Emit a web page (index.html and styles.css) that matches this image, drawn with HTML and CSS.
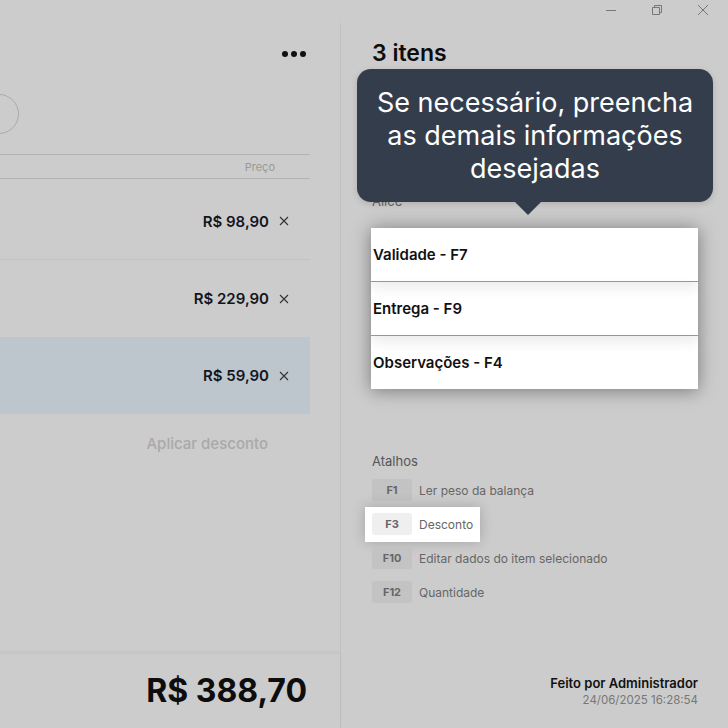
FILE: index.html
```html
<!DOCTYPE html>
<html lang="pt-BR">
<head>
  <meta charset="UTF-8">
  <title>PDV</title>
  <link rel="stylesheet" href="styles.css">
</head>
<body>

  <div class="window">
    <div class="titlebar">
      <span class="win-btn">
        <svg width="12" height="12" viewBox="0 0 12 12"><path d="M1 6.5h10" stroke="#777" stroke-width="1"/></svg>
      </span>
      <span class="win-btn">
        <svg width="12" height="12" viewBox="0 0 12 12"><path d="M1.5 3.5h7v7h-7z M3.5 3.5v-2h7v7h-2" fill="none" stroke="#777" stroke-width="1"/></svg>
      </span>
      <span class="win-btn">
        <svg width="12" height="12" viewBox="0 0 12 12"><path d="M1 1l10 10M11 1L1 11" stroke="#777" stroke-width="1"/></svg>
      </span>
    </div>

    <div class="main">
      <!-- CARRINHO -->
      <div class="cart">
        <div class="cart-top">
          <span class="more"><i></i><i></i><i></i></span>
        </div>
        <div class="client-row">
          <span class="avatar"></span>
        </div>
        <div class="table-head">Preço</div>
        <div class="rows">
          <div class="row sep">
            <span class="price">R$ 98,90</span>
            <svg class="remove" width="10" height="10" viewBox="0 0 10 10"><path d="M1 1l8 8M9 1L1 9" stroke="#333" stroke-width="1.1"/></svg>
          </div>
          <div class="row">
            <span class="price">R$ 229,90</span>
            <svg class="remove" width="10" height="10" viewBox="0 0 10 10"><path d="M1 1l8 8M9 1L1 9" stroke="#333" stroke-width="1.1"/></svg>
          </div>
          <div class="row selected">
            <span class="price">R$ 59,90</span>
            <svg class="remove" width="10" height="10" viewBox="0 0 10 10"><path d="M1 1l8 8M9 1L1 9" stroke="#333" stroke-width="1.1"/></svg>
          </div>
        </div>
        <div class="discount">Aplicar desconto</div>
        <div class="total">R$ 388,70</div>
      </div>

      <!-- LATERAL -->
      <div class="side">
        <div class="side-title">3 itens</div>
        <div class="client-name">Alice</div>

        <div class="tooltip">Se necessário, preencha as demais informações desejadas</div>

        <div class="menu">
          <div class="menu-item">Validade - F7</div>
          <div class="menu-item">Entrega - F9</div>
          <div class="menu-item">Observações - F4</div>
        </div>

        <div class="shortcuts">
          <div class="shortcuts-title">Atalhos</div>
          <div class="shortcut"><span class="key">F1</span>Ler peso da balança</div>
          <div class="shortcut focus"><span class="key">F3</span>Desconto</div>
          <div class="shortcut"><span class="key">F10</span>Editar dados do item selecionado</div>
          <div class="shortcut"><span class="key">F12</span>Quantidade</div>
        </div>

        <div class="author">
          <div class="author-name">Feito por Administrador</div>
          <div class="author-date">24/06/2025 16:28:54</div>
        </div>
      </div>
    </div>
  </div>

</body>
</html>
```

FILE: styles.css
```css
body {
  margin: 0;
  background: #cccccc;
  font-family: 'Inter', 'Noto Sans', sans-serif;
  color: #111;
}

.window {
  width: 728px;
  height: 728px;
  display: flex;
  flex-direction: column;
  overflow: hidden;
}

.titlebar {
  height: 23px;
  display: flex;
  justify-content: flex-end;
  align-items: center;
  padding-right: 19px;
  gap: 34px;
}

.win-btn {
  display: flex;
  width: 12px;
  height: 12px;
  margin-bottom: 3px;
}

.main {
  flex: 1;
  display: flex;
}

/* carrinho */
.cart {
  width: 340px;
  border-right: 1px solid #c0c0c0;
  display: flex;
  flex-direction: column;
}

.cart-top {
  height: 62px;
  display: flex;
  justify-content: flex-end;
  align-items: center;
  padding-right: 34px;
}

.more {
  display: flex;
  gap: 3px;
}

.more i {
  width: 6px;
  height: 6px;
  border-radius: 50%;
  background: #111;
}

.client-row {
  height: 69px;
  display: flex;
  align-items: flex-start;
}

.avatar {
  width: 38px;
  height: 38px;
  margin: 9px 0 0 -21px;
  border: 1px solid #aaa;
  border-radius: 50%;
}

.table-head {
  width: 275px;
  height: 23px;
  padding-right: 35px;
  border-top: 1px solid #b3b3b3;
  border-bottom: 1px solid #b3b3b3;
  display: flex;
  align-items: center;
  justify-content: flex-end;
  font-size: 11px;
  color: #999;
}

.rows {
  margin-top: 4px;
  width: 310px;
}

.row {
  height: 77px;
  display: flex;
  align-items: center;
  justify-content: flex-end;
  padding-right: 21px;
}

.row.sep {
  height: 76px;
  border-bottom: 1px solid #c2c2c2;
}

.row.selected {
  background: #bcc6cc;
}

.price {
  font-size: 15px;
  font-weight: 600;
  color: #14141e;
}

.remove {
  margin-left: 10px;
}

.discount {
  width: 268px;
  text-align: right;
  margin-top: 20px;
  font-size: 15px;
  font-weight: 500;
  color: #a9a9a9;
}

.total {
  margin-top: auto;
  height: 75px;
  box-shadow: 0 -1px 3px rgba(0, 0, 0, 0.05);
  border-top: 1px solid #c6c6c6;
  box-sizing: border-box;
  display: flex;
  align-items: center;
  justify-content: flex-end;
  padding: 0 33px 2px 0;
  font-size: 32px;
  font-weight: 700;
  color: #0d0d0d;
}

/* lateral */
.side {
  flex: 1;
  position: relative;
  padding: 16px 30px 0 31px;
  display: flex;
  flex-direction: column;
}

.side-title {
  font-size: 23px;
  font-weight: 600;
  color: #0d0d0d;
}

.client-name {
  margin-top: 126px;
  font-size: 13px;
  color: #666;
}

.tooltip {
  position: absolute;
  left: 16px;
  top: 46px;
  width: 356px;
  height: 133px;
  box-sizing: border-box;
  padding: 0 14px;
  background: #343d4c;
  border-radius: 14px;
  color: #fff;
  font-size: 27px;
  line-height: 33px;
  text-align: center;
  display: flex;
  align-items: center;
  justify-content: center;
  box-shadow: 0 2px 6px rgba(0, 0, 0, 0.15);
}

.tooltip::after {
  content: '';
  position: absolute;
  left: 158px;
  bottom: -13px;
  border-left: 13px solid transparent;
  border-right: 13px solid transparent;
  border-top: 13px solid #343d4c;
}

.menu {
  position: absolute;
  left: 30px;
  top: 205px;
  width: 327px;
  background: #fff;
  box-shadow: 0 0 18px rgba(0, 0, 0, 0.35);
}

.menu-item {
  height: 53px;
  display: flex;
  align-items: center;
  padding-left: 2px;
  font-size: 15px;
  font-weight: 600;
  color: #111;
  border-bottom: 1px solid #999;
  box-shadow: 0 6px 12px rgba(0, 0, 0, 0.08);
}

.menu-item:last-child {
  border-bottom: none;
}

.shortcuts {
  margin-top: 244px;
  display: flex;
  flex-direction: column;
  gap: 12px;
}

.shortcuts-title {
  font-size: 13px;
  color: #555;
  margin-bottom: -2px;
}

.shortcut {
  display: flex;
  align-items: center;
  font-size: 12px;
  color: #666;
  height: 22px;
}

.key {
  width: 40px;
  height: 22px;
  margin-right: 7px;
  border-radius: 3px;
  background: #c3c3c3;
  display: flex;
  align-items: center;
  justify-content: center;
  font-size: 11px;
  font-weight: 700;
  color: #666;
}

.shortcut.focus {
  align-self: flex-start;
  margin: -6px 0 -7px -7px;
  padding: 6px 7px 7px;
  background: #fff;
  box-shadow: 0 0 14px rgba(0, 0, 0, 0.2);
}

.shortcut.focus .key {
  background: #efefef;
}

.author {
  margin-top: auto;
  margin-bottom: 21px;
  text-align: right;
}

.author-name {
  font-size: 13px;
  font-weight: 600;
  color: #111;
}

.author-date {
  font-size: 11.5px;
  color: #777;
  margin-top: 2px;
}
```
